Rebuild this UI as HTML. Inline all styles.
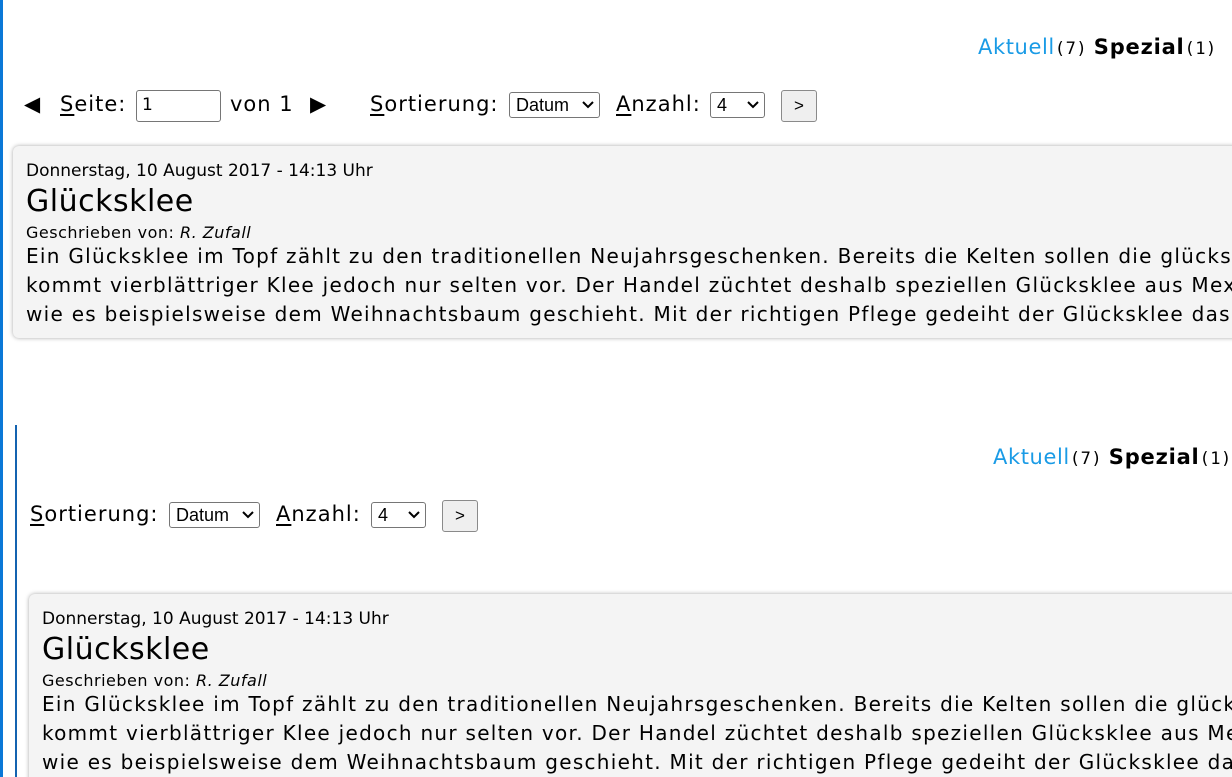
<!DOCTYPE html>
<html><head><meta charset="utf-8"><style>
html,body{margin:0;padding:0;width:1232px;height:777px;overflow:hidden;background:#fff;font-family:"DejaVu Sans","Liberation Sans",sans-serif;color:#000;position:relative}
.a{position:absolute;white-space:nowrap}
.vl{position:absolute;left:0;top:0;width:3px;height:777px;background:#0a78d7}
.vl2{position:absolute;left:15px;top:425px;width:2px;height:352px;background:#1463b0}
.tabs{font-size:21px}
.tabs .ak{color:#1a9be6;letter-spacing:0.6px}
.tabs .n{font-size:17px;font-family:"DejaVu Sans Mono",monospace;letter-spacing:0.5px}
.tabs b{font-weight:bold;letter-spacing:0.8px}
.lbl{font-size:21px;letter-spacing:1px}
u{text-decoration:underline;text-underline-offset:3px}
.inp{position:absolute;border:1px solid #767676;border-radius:3px;background:#fff;box-sizing:border-box;font-size:17px;font-family:"DejaVu Sans",sans-serif;padding-left:5px;line-height:29px}
.sel{position:absolute;border:1px solid #767676;border-radius:3px;background:#fff;box-sizing:border-box;font-family:"Liberation Sans",Arial,sans-serif;font-size:18px;padding-left:6px;line-height:24px}
.sel svg{position:absolute;right:5px;top:8px}
.btn{position:absolute;border:1px solid #8a8a8a;border-radius:3px;background:#efefef;box-sizing:border-box;font-family:"Liberation Sans",Arial,sans-serif;font-size:17px;text-align:center;line-height:30px}
.card{position:absolute;background:#f4f4f4;border-radius:6px;box-shadow:0 0 4px rgba(0,0,0,.35);overflow:hidden;width:1300px}
.card div{white-space:nowrap;position:absolute;left:13px}
.d{font-size:17px}
.t{font-size:30px;letter-spacing:0.5px}
.g{font-size:16px;letter-spacing:0.5px}
.b{font-size:20px;line-height:29px;letter-spacing:1.28px}
</style></head><body>
<div class="vl"></div>
<div class="vl2"></div>

<div class="a tabs" style="left:978px;top:35px"><span class="ak">Aktuell</span><span class="n">(7)</span> <b>Spezial</b><span class="n">(1)</span></div>

<div class="a lbl" style="left:24px;top:92px">◀</div>
<div class="a lbl" style="left:60px;top:92px"><u>S</u>eite:</div>
<div class="inp" style="left:136px;top:90px;width:85px;height:32px">1</div>
<div class="a lbl" style="left:230px;top:92px">von 1</div>
<div class="a lbl" style="left:310px;top:92px">▶</div>
<div class="a lbl" style="left:370px;top:92px"><u>S</u>ortierung:</div>
<div class="sel" style="left:509px;top:92px;width:91px;height:26px">Datum<svg width="12" height="8"><path d="M1 1L6 6L11 1" stroke="#000" stroke-width="2" fill="none"/></svg></div>
<div class="a lbl" style="left:616px;top:92px"><u>A</u>nzahl:</div>
<div class="sel" style="left:710px;top:92px;width:55px;height:26px">4<svg width="12" height="8"><path d="M1 1L6 6L11 1" stroke="#000" stroke-width="2" fill="none"/></svg></div>
<div class="btn" style="left:781px;top:90px;width:36px;height:32px">&gt;</div>

<div class="card" style="left:13px;top:146px;height:192px">
<div class="d" style="top:15px">Donnerstag, 10 August 2017 - 14:13 Uhr</div>
<div class="t" style="top:38px">Glücksklee</div>
<div class="g" style="top:77px">Geschrieben von: <i>R. Zufall</i></div>
<div class="b" style="top:96px">Ein Glücksklee im Topf zählt zu den traditionellen Neujahrsgeschenken. Bereits die Kelten sollen die glücksbringende Pflanze verehrt haben.<br>kommt vierblättriger Klee jedoch nur selten vor. Der Handel züchtet deshalb speziellen Glücksklee aus Mexiko, dessen Blätter immer vierteilig sind,<br>wie es beispielsweise dem Weihnachtsbaum geschieht. Mit der richtigen Pflege gedeiht der Glücksklee das ganze Jahr über prächtig.</div>
</div>

<div class="a tabs" style="left:993px;top:445px"><span class="ak">Aktuell</span><span class="n">(7)</span> <b>Spezial</b><span class="n">(1)</span></div>

<div class="a lbl" style="left:30px;top:502px"><u>S</u>ortierung:</div>
<div class="sel" style="left:169px;top:502px;width:91px;height:26px">Datum<svg width="12" height="8"><path d="M1 1L6 6L11 1" stroke="#000" stroke-width="2" fill="none"/></svg></div>
<div class="a lbl" style="left:276px;top:502px"><u>A</u>nzahl:</div>
<div class="sel" style="left:371px;top:502px;width:55px;height:26px">4<svg width="12" height="8"><path d="M1 1L6 6L11 1" stroke="#000" stroke-width="2" fill="none"/></svg></div>
<div class="btn" style="left:442px;top:500px;width:36px;height:32px">&gt;</div>

<div class="card" style="left:29px;top:594px;height:200px">
<div class="d" style="top:15px">Donnerstag, 10 August 2017 - 14:13 Uhr</div>
<div class="t" style="top:38px">Glücksklee</div>
<div class="g" style="top:77px">Geschrieben von: <i>R. Zufall</i></div>
<div class="b" style="top:96px">Ein Glücksklee im Topf zählt zu den traditionellen Neujahrsgeschenken. Bereits die Kelten sollen die glücksbringende Pflanze verehrt haben.<br>kommt vierblättriger Klee jedoch nur selten vor. Der Handel züchtet deshalb speziellen Glücksklee aus Mexiko, dessen Blätter immer vierteilig sind,<br>wie es beispielsweise dem Weihnachtsbaum geschieht. Mit der richtigen Pflege gedeiht der Glücksklee das ganze Jahr über prächtig.</div>
</div>
</body></html>
